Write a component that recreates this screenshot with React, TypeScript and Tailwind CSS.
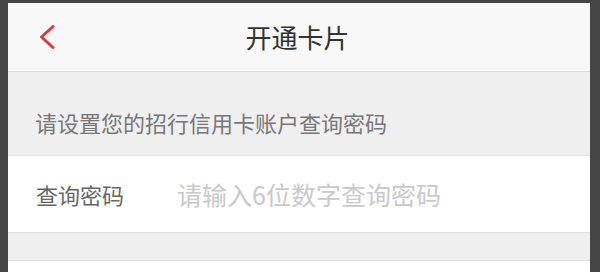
const cjk = { fontFamily: '"Noto Sans CJK SC", "Noto Sans", sans-serif' };

export default function App() {
  return (
    <div className="w-[600px] h-[272px] overflow-hidden bg-[#454545] pl-[8px] pr-[10px] pt-[3px]" style={cjk}>
      <div className="flex h-full flex-col bg-white">
        {/* header */}
        <header className="grid h-[69px] shrink-0 grid-cols-[1fr_auto_1fr] items-center border-b border-[#dcdcdc] bg-[#f8f8f8]">
          <div className="pl-[31px]">
            <svg width="16" height="24" viewBox="0 0 16 24" fill="none">
              <polyline
                points="14,1.5 2.5,12 14,22.5"
                stroke="#e0373d"
                strokeWidth="3"
                strokeLinecap="round"
                strokeLinejoin="round"
              />
            </svg>
          </div>
          <h1 className="pr-[3px] text-[26px] leading-[30px] text-[#333333]">开通卡片</h1>
          <div />
        </header>

        <div className="flex h-[83px] shrink-0 items-end bg-[#efefef] pb-[22px] pl-[27px]">
          <p className="text-[22px] leading-[22px] text-[#777777]">请设置您的招行信用卡账户查询密码</p>
        </div>

        <div className="flex h-[78px] shrink-0 items-center border-y border-[#e2e2e2] bg-white pl-[28px]">
          <span className="w-[141px] text-[22px] leading-[24px] text-[#666666]">查询密码</span>
          <span className="text-[25px] leading-[28px] text-[#c9c9c9]">请输入6位数字查询密码</span>
        </div>

        <div className="h-[28px] shrink-0 border-b border-[#e2e2e2] bg-[#efefef]" />
        <div className="flex-1 bg-white" />
      </div>
    </div>
  );
}
